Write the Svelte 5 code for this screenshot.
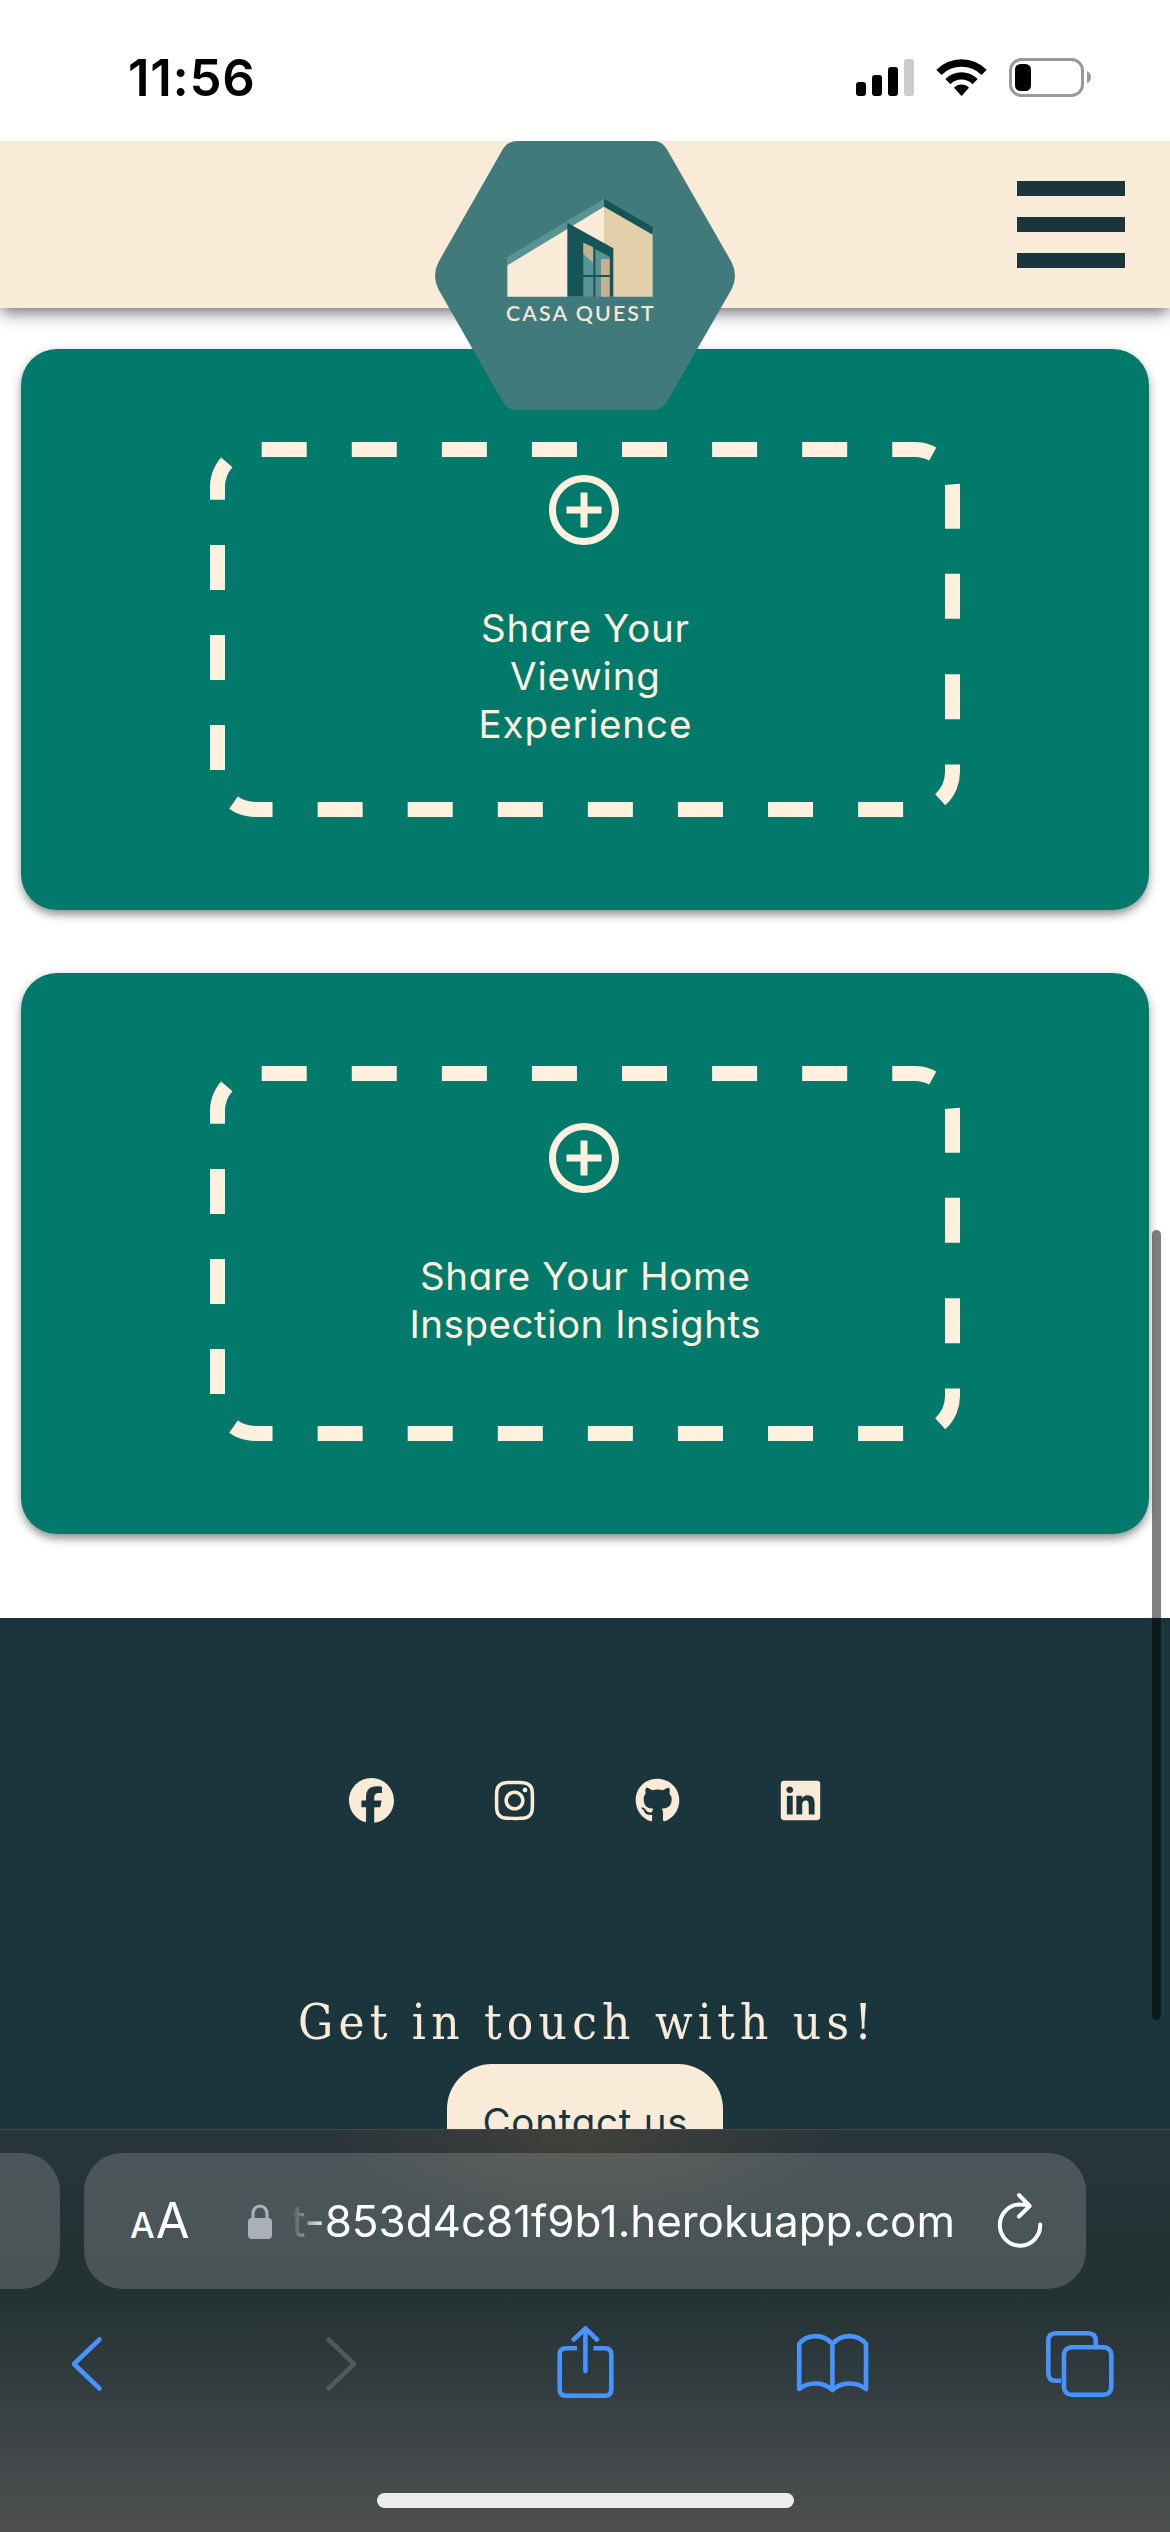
<script>
  const cards = [
    ['Share Your', 'Viewing', 'Experience'],
    ['Share Your Home', 'Inspection Insights'],
  ];
  const fits = {
    'Share Your': 204,
    Viewing: 146,
    Experience: 209,
    'Share Your Home': 326,
    'Inspection Insights': 347,
  };
  const socials = [
    {
      name: 'Facebook',
      w: 512,
      d: 'M512 256C512 114.6 397.4 0 256 0S0 114.6 0 256C0 376 82.7 476.8 194.2 504.5V334.2H141.4V256h52.8V222.3c0-87.1 39.4-127.5 125-127.5c16.2 0 44.2 3.2 55.7 6.4V172c-6-.6-16.5-1-29.6-1c-42 0-58.2 15.9-58.2 57.2V256h83.6l-14.4 78.2H287V510.1C413.8 494.8 512 386.9 512 256z',
    },
    {
      name: 'Instagram',
      w: 448,
      d: 'M224.1 141c-63.6 0-114.9 51.3-114.9 114.9s51.3 114.9 114.9 114.9S339 319.5 339 255.9 287.7 141 224.1 141zm0 189.6c-41.1 0-74.7-33.5-74.7-74.7s33.5-74.7 74.7-74.7 74.7 33.5 74.7 74.7-33.6 74.7-74.7 74.7zm146.4-194.3c0 14.9-12 26.8-26.8 26.8-14.9 0-26.8-12-26.8-26.8s12-26.8 26.8-26.8 26.8 12 26.8 26.8zm76.1 27.2c-1.7-35.9-9.9-67.7-36.2-93.9-26.2-26.2-58-34.4-93.9-36.2-37-2.1-147.9-2.1-184.9 0-35.8 1.7-67.6 9.9-93.9 36.1s-34.4 58-36.2 93.9c-2.1 37-2.1 147.9 0 184.9 1.7 35.9 9.9 67.7 36.2 93.9s58 34.4 93.9 36.2c37 2.1 147.9 2.1 184.9 0 35.9-1.7 67.7-9.9 93.9-36.2 26.2-26.2 34.4-58 36.2-93.9 2.1-37 2.1-147.8 0-184.8zM398.8 388c-7.8 19.6-22.9 34.7-42.6 42.6-29.5 11.7-99.5 9-132.1 9s-102.7 2.6-132.1-9c-19.6-7.8-34.7-22.9-42.6-42.6-11.7-29.5-9-99.5-9-132.1s-2.6-102.7 9-132.1c7.8-19.6 22.9-34.7 42.6-42.6 29.5-11.7 99.5-9 132.1-9s102.7-2.6 132.1 9c19.6 7.8 34.7 22.9 42.6 42.6 11.7 29.5 9 99.5 9 132.1s2.7 102.7-9 132.1z',
    },
    {
      name: 'GitHub',
      w: 496,
      d: 'M165.9 397.4c0 2-2.3 3.6-5.2 3.6-3.3.3-5.6-1.3-5.6-3.6 0-2 2.3-3.6 5.2-3.6 3-.3 5.6 1.3 5.6 3.6zM244.8 8C106.1 8 0 113.3 0 252c0 110.9 69.8 205.8 169.5 239.2 12.8 2.3 17.3-5.6 17.3-12.1 0-6.2-.3-40.4-.3-61.4 0 0-70 15-84.7-29.8 0 0-11.4-29.1-27.8-36.6 0 0-22.9-15.7 1.6-15.4 0 0 24.9 2 38.6 25.8 21.9 38.6 58.6 27.5 72.9 20.9 2.3-16 8.8-27.1 16-33.7-55.9-6.2-112.3-14.3-112.3-110.5 0-27.5 7.6-41.3 23.6-58.9-2.6-6.5-11.1-33.3 2.6-67.9 20.9-6.5 69 27 69 27 20-5.6 41.5-8.5 62.8-8.5s42.8 2.9 62.8 8.5c0 0 48.1-33.6 69-27 13.7 34.7 5.2 61.4 2.6 67.9 16 17.7 25.8 31.5 25.8 58.9 0 96.5-58.9 104.2-114.8 110.5 9.2 7.9 17 22.9 17 46.4 0 33.7-.3 75.4-.3 83.6 0 6.5 4.6 14.4 17.3 12.1C428.2 457.8 496 362.9 496 252 496 113.3 383.5 8 244.8 8z',
    },
    {
      name: 'LinkedIn',
      w: 448,
      d: 'M416 32H31.9C14.3 32 0 46.5 0 64.3v383.4C0 465.5 14.3 480 31.9 480H416c17.6 0 32-14.5 32-32.3V64.3c0-17.8-14.4-32.3-32-32.3zM135.4 416H69V202.2h66.5V416zm-33.2-243c-21.3 0-38.5-17.3-38.5-38.5S80.9 96 102.2 96c21.2 0 38.5 17.3 38.5 38.5 0 21.3-17.2 38.5-38.5 38.5zm282.1 243h-66.4V312c0-24.8-.5-56.7-34.5-56.7-34.6 0-39.9 27-39.9 54.9V416h-66.4V202.2h63.7v29.2h.9c8.9-16.8 30.6-34.5 62.9-34.5 67.2 0 79.7 44.3 79.7 101.9V416z',
    },
  ];

  // Spreads the letters of a line so that it takes up exactly `width` pixels.
  function fit(node, width) {
    const apply = () => {
      node.style.letterSpacing = '0px';
      node.style.marginRight = '0px';
      const natural = node.getBoundingClientRect().width;
      const gap = (width - natural) / (node.textContent.length - 1);
      node.style.letterSpacing = `${gap}px`;
      node.style.marginRight = `${-gap}px`;
    };
    apply();
    document.fonts?.ready.then(apply);
  }
</script>

<div class="screen">
  <div class="status">
    <span class="time" use:fit={127}>11:56</span>
    <svg class="indicators" viewBox="856 56 240 44" aria-hidden="true">
      <rect x="856" y="82" width="10" height="14" rx="3" />
      <rect x="872" y="75" width="10" height="21" rx="3" />
      <rect x="888" y="67" width="10" height="29" rx="3" />
      <rect x="904" y="59" width="10" height="37" rx="3" fill="#ccc" />
      <path d="M936.3 69.8A35.5 35.5 0 0 1 986.7 69.8L981.5 75A28.2 28.2 0 0 0 941.5 75Z" />
      <path d="M945.3 78.9A22.8 22.8 0 0 1 977.7 78.9L972.5 84.2A15.5 15.5 0 0 0 950.5 84.2Z" />
      <path d="M954 87.7A10.6 10.6 0 0 1 969 87.7L961.5 96Z" />
      <rect x="1010.5" y="59.5" width="72" height="36" rx="11" fill="none" stroke="#999" stroke-width="3" />
      <rect x="1015" y="64" width="16" height="27" rx="5.5" />
      <path d="M1087 71Q1091 73 1091 77.3T1087 83.5Z" fill="#999" />
    </svg>
  </div>

  <header class="header">
    <svg class="logo" viewBox="45 33 900 807" role="img" aria-label="Casa Quest">
      <path fill="#407a7b" d="M290 33H702Q727 33 742 60L934 395Q956 437 934 479L742 813Q727 840 702 840H288Q262 840 247 813L56 479Q34 437 56 395L247 60Q263 33 290 33Z" />
      <path fill="#faebd9" d="M262 390L552 222V500H262Z" />
      <path fill="#e3d0ab" d="M552 224L698 306V500H552Z" />
      <path fill="#5a9394" d="M261 382L552 206V230L261 407Z" />
      <path fill="#165557" d="M552 206L698 291V314L552 230ZM442 278L580 355V500H442Z" />
      <path fill="#5a9394" d="M490 338L569 380V500H490Z" />
      <path fill="#c6b18f" d="M490 338L520 352V399L490 371ZM543 387H569V500H543Z" />
      <path fill="none" stroke="#165557" stroke-width="6" d="M523 350V500M488 438H572" />
      <text x="258" y="573" textLength="443" lengthAdjust="spacing">CASA QUEST</text>
    </svg>
    <button class="menu" aria-label="Menu"><i></i><i></i><i></i></button>
  </header>

  <main class="cards">
    {#each cards as lines, n}
      <section class="card">
        <div class="drop">
          <svg class="dashes" viewBox="0 0 750 375" aria-hidden="true">
            <clipPath id="edge{n}"><rect width="750" height="375" rx="45" /></clipPath>
            <path
              clip-path="url(#edge{n})"
              d="M750 232.3V330A45 45 0 0 1 705 375H45A45 45 0 0 1 0 330V45A45 45 0 0 1 45 0H705A45 45 0 0 1 750 45V180"
            />
          </svg>
          <svg class="add" viewBox="0 0 24 24" aria-hidden="true">
            <path d="M13 7h-2v4H7v2h4v4h2v-4h4v-2h-4V7zm-1-5C6.48 2 2 6.48 2 12s4.480 10 10 10 10-4.480 10-10S17.520 2 12 2zm0 18c-4.410 0-8-3.590-8-8s3.590-8 8-8 8 3.590 8 8-3.590 8-8 8z" />
          </svg>
          <p class="label">
            {#each lines as line}
              <span class="line"><span class="ink" use:fit={fits[line] + 4}>{line}</span></span>
            {/each}
          </p>
        </div>
      </section>
    {/each}
  </main>

  <footer class="footer">
    <div class="socials">
      {#each socials as s}
        <svg class="social" viewBox="{s.w / 2 - 256} 0 512 512" role="img" aria-label={s.name}><path d={s.d} /></svg>
      {/each}
    </div>
    <h2 class="touch"><span class="ink" use:fit={574}>Get in touch with us!</span></h2>
    <button class="contact"><span class="ink" use:fit={205}>Contact us</span></button>
  </footer>

  <div class="browser">
    <div class="address-row">
      <div class="prev-tab"></div>
      <div class="address">
        <div class="reader"><span class="small">A</span><span class="big">A</span></div>
        <svg class="lock" viewBox="0 0 24 35" aria-hidden="true">
          <path d="M5 16V9.500a7 7.500 0 0 1 14 0V16" fill="none" stroke="#abafb9" stroke-width="3.200" />
          <rect y="14" width="24" height="21" rx="4" fill="#abafb9" />
        </svg>
        <div class="url"><span class="ink" use:fit={664}>t-853d4c81f9b1.herokuapp.com</span></div>
        <svg class="reload" viewBox="996 2190 48 58" aria-hidden="true">
          <path d="M1040.200 2223.500A20.200 20.600 0 1 1 1020 2203.500Q1025 2203.500 1029 2205M1019 2194L1029.600 2205L1019 2215.500" />
        </svg>
      </div>
    </div>
    <div class="tools">
      <svg viewBox="68 2326 37 76" width="37" aria-hidden="true"><path d="M99.500 2339.500L74 2364L99.500 2388.500" /></svg>
      <svg class="off" viewBox="323 2326 37 76" width="37" aria-hidden="true"><path d="M328.500 2339.500L354 2364L328.500 2388.500" /></svg>
      <svg viewBox="555 2326 61 76" width="61" aria-hidden="true">
        <path d="M577 2348.300H566Q559.700 2348.300 559.700 2354.500V2389.500Q559.700 2395.800 566 2395.800H605Q611.300 2395.800 611.300 2389.500V2354.500Q611.300 2348.300 605 2348.300H593.500" stroke-linecap="butt" />
        <path d="M585.400 2371V2328.500M573.800 2339.500L585.400 2328.300L597 2339.500" />
      </svg>
      <svg viewBox="795 2326 75 76" width="75" aria-hidden="true">
        <path d="M832.400 2390V2344C823 2333 807 2334 799.200 2344V2389C809 2381 824 2382 832.400 2390C841 2382 856 2381 866 2389V2344C858 2334 842 2333 832.400 2344" />
      </svg>
      <svg viewBox="1044 2326 72 76" width="72" aria-hidden="true">
        <path d="M1061 2380.800H1056Q1048.300 2380.800 1048.300 2373V2341Q1048.300 2333.200 1056 2333.200H1088Q1095.800 2333.200 1095.800 2341V2346" stroke-linecap="butt" />
        <rect x="1064" y="2347.200" width="47.300" height="47.600" rx="7.500" />
      </svg>
    </div>
    <div class="home"></div>
  </div>

  <div class="scroll-thumb"></div>
</div>

<style>
  :global(body) { margin: 0; background: #fff; }
  .screen {
    position: relative;
    width: 1170px;
    height: 2532px;
    overflow: hidden;
    display: flex;
    flex-direction: column;
    background: #fff;
    font-family: Inter, 'Liberation Sans', sans-serif;
  }
  button { border: 0; padding: 0; font: inherit; }
  .ink { white-space: nowrap; }

  .status {
    flex: none;
    height: 141px;
    box-sizing: border-box;
    padding: 0 74px 0 128px;
    display: flex;
    justify-content: space-between;
    align-items: flex-start;
  }
  .time { margin-top: 48px; font-size: 51px; line-height: 60px; font-weight: 600; white-space: nowrap; }
  .indicators { margin-top: 56px; width: 240px; height: 44px; }

  .header {
    position: relative;
    z-index: 2;
    flex: none;
    height: 167px;
    background: #faebd9;
    box-shadow: 0 6px 12px -3px rgba(0, 0, 0, 0.4), 0 9px 15px rgba(0, 0, 0, 0.16), 0 3px 24px rgba(0, 0, 0, 0.08);
    clip-path: inset(0 0 -120px 0);
    display: flex;
    justify-content: flex-end;
    padding-right: 45px;
  }
  .logo { position: absolute; top: 0; left: 435px; width: 300px; height: 269px; }
  .logo text { font-family: Lato, sans-serif; font-weight: 600; font-size: 64px; fill: #f3e6d4; }
  .menu {
    margin-top: 40px;
    width: 108px;
    height: 87px;
    background: none;
    display: flex;
    flex-direction: column;
    justify-content: space-between;
  }
  .menu i { display: block; width: 108px; height: 15px; background: #1a353b; }

  .cards {
    flex: none;
    height: 1310px;
    box-sizing: border-box;
    padding: 41px 21px 0;
    display: flex;
    flex-direction: column;
    gap: 63px;
  }
  .card {
    height: 561px;
    border-radius: 36px;
    background: #017a6b;
    box-shadow: 0 6px 9px -2px rgba(0, 0, 0, 0.3), 0 3px 12px rgba(0, 0, 0, 0.24);
    display: flex;
    justify-content: center;
    align-items: center;
  }
  .drop {
    position: relative;
    width: 750px;
    height: 375px;
    display: flex;
    flex-direction: column;
    align-items: center;
    justify-content: center;
  }
  .dashes { position: absolute; inset: 0; width: 750px; height: 375px; }
  .dashes path { fill: none; stroke: #fff1de; stroke-width: 30; stroke-dasharray: 45 45.080; }
  .add { flex: none; width: 84px; height: 84px; margin-right: 2px; fill: #fff1de; }
  .label {
    margin: 52px 0 43px;
    color: #fff1de;
    font-size: 38.500px;
    font-weight: 400;
    line-height: 48px;
    font-feature-settings: 'cv11';
    text-align: center;
  }
  .line { display: block; }

  .footer {
    flex: none;
    height: 511px;
    overflow: hidden;
    background: #1a353b;
    display: flex;
    flex-direction: column;
    align-items: center;
  }
  .socials { margin-top: 160px; padding-left: 2px; display: flex; gap: 98.200px; }
  .social { width: 45px; height: 45px; fill: #faebd9; }
  .touch {
    flex: none;
    margin: 167px 0 0;
    height: 74px;
    line-height: 66px;
    font-family: 'DejaVu Serif Condensed', 'DejaVu Serif', serif;
    font-stretch: condensed;
    font-weight: 400;
    font-size: 49px;
    color: #faebd9;
  }
  .contact {
    flex: none;
    width: 276px;
    height: 116px;
    border-radius: 45px;
    background: #faebd9;
    color: #1a353b;
    font-size: 38.500px;
    font-weight: 400;
    font-feature-settings: 'cv11';
  }

  .browser {
    flex: none;
    height: 403px;
    box-sizing: border-box;
    border-top: 1px solid #474b4b;
    background:
      radial-gradient(ellipse 260px 110px at 585px 0, rgba(88, 74, 60, 0.55), rgba(88, 74, 60, 0)),
      linear-gradient(#28353a 0, #243233 130px, #253233 165px, #2e3a3b 235px, #3c4346 300px, #454a4b 345px, #4d4e4f 403px);
    display: flex;
    flex-direction: column;
  }
  .address-row { display: flex; gap: 24px; padding-top: 23px; }
  .prev-tab { width: 60px; height: 136px; border-radius: 0 38px 38px 0; background: rgba(255, 255, 255, 0.17); }
  .address {
    width: 1002px;
    height: 136px;
    box-sizing: border-box;
    border-radius: 38px;
    background: rgba(255, 255, 255, 0.17);
    color: #fff;
    display: flex;
    align-items: center;
    padding: 0 42px 0 46px;
  }
  .reader { width: 118px; display: flex; align-items: baseline; gap: 1px; line-height: 56px; margin-top: 3px; }
  .small { font-size: 35px; font-weight: 500; }
  .big { font-size: 49px; }
  .lock { width: 24px; height: 35px; }
  .url {
    flex: 1;
    margin-left: 19px;
    font-size: 44px;
    line-height: 56px;
    white-space: nowrap;
    -webkit-mask-image: linear-gradient(90deg, transparent 0, rgba(0, 0, 0, 0.350) 12px, #000 36px);
    mask-image: linear-gradient(90deg, transparent 0, rgba(0, 0, 0, 0.350) 12px, #000 36px);
  }
  .reload { width: 48px; height: 58px; fill: none; stroke: #fff; stroke-width: 4; stroke-linecap: round; stroke-linejoin: round; margin-bottom: 3px; }
  .tools { display: grid; grid-template-columns: 255px 232px 240px 249px 72px; padding: 37px 54px 0 68px; }
  .tools svg { height: 76px; fill: none; stroke: #4793ff; stroke-width: 4.600; stroke-linecap: round; stroke-linejoin: round; }
  .tools .off { stroke: #52595b; }
  .home { width: 417px; height: 15px; border-radius: 8px; background: #ececec; margin: 91px auto 0; }

  .scroll-thumb {
    position: absolute;
    z-index: 3;
    right: 9px;
    top: 1230px;
    width: 9px;
    height: 790px;
    border-radius: 5px;
    background: rgba(0, 0, 0, 0.500);
  }
</style>
